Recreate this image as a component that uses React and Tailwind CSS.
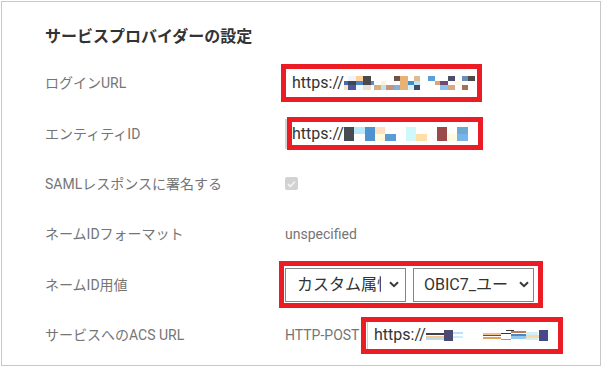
const m1 = [
  [4, 0, 8.3, 5, "#eef6fc"], [12.3, 0, 6.7, 5, "#fcd098"], [19, 0, 8.3, 5, "#4a4a4a"],
  [49.7, 0, 6.6, 5, "#6e5346"], [56.3, 0, 7.7, 5, "#e8b274"], [70, 0, 6.3, 5, "#dcbc96"],
  [84, 0, 6.7, 5, "#5a9fd8"], [104, 0, 6.7, 5, "#4b5068"], [118.3, 0, 5.7, 5, "#6c8fb8"],
  [124, 0, 6.7, 5, "#4d4a48"],
  [0, 5, 4, 4, "#4a68b0"], [4, 5, 8.3, 4, "#3f4658"], [12.3, 5, 6.7, 4, "#4a86c8"],
  [19, 5, 8.3, 4, "#4a4a4a"], [27.3, 5, 2.4, 4, "#4a92d2"], [37.3, 5, 5, 4, "#fff2d0"],
  [56.3, 5, 7.7, 4, "#e8b274"], [64, 5, 6, 4, "#3f8fd0"], [70, 5, 6.3, 4, "#b8e8f8"],
  [90.7, 5, 5.6, 4, "#e3a468"], [96.3, 5, 7.7, 4, "#6f4a72"], [110.7, 5, 6.6, 4, "#fff8e6"],
  [0, 9, 4, 5, "#fbe2c8"], [4, 9, 8.3, 5, "#4c5a9c"], [12.3, 9, 6.7, 5, "#f4f8fc"],
  [19, 9, 8.3, 5, "#e6e0d6"], [29.7, 9, 7.6, 5, "#d6b07e"], [37.3, 9, 5, 5, "#bce4ec"],
  [42.3, 9, 7.4, 5, "#c89282"], [49.7, 9, 6.6, 5, "#86b0d8"], [56.3, 9, 7.7, 5, "#e8b274"],
  [64, 9, 6, 5, "#d8f2f8"], [70, 9, 6.3, 5, "#434a6a"], [96.3, 9, 7.7, 5, "#8cc2f0"],
  [104, 9, 6.7, 5, "#d4aa82"], [118.3, 9, 5.7, 5, "#a27452"],
];

const m2 = [
  [0, 0, 10.3, 14, "#474c52"], [10.3, 0, 10.7, 7, "#b8e8fa"], [21, 0, 10, 14, "#4e93d0"],
  [31, 0, 10, 7, "#ffe0c2"], [31, 7, 10, 7, "#fffbd8"], [41, 7, 11, 7, "#5b9bd6"],
  [62, 0, 10, 14, "#cff8fb"], [72, 7, 11, 7, "#ffdfa8"], [93, 0, 10, 14, "#9b4a49"],
  [103, 7, 10, 7, "#fffbe0"], [113, 0, 11, 7, "#6eaad0"], [113, 7, 11, 7, "#79b4ea"],
];

const m4 = [
  [0, 3, 18, 2, "#40404e"], [0, 6, 18, 2, "#f4c890"], [0, 8, 18, 2, "#b8dcf0"],
  [18, 0, 9, 11, "#4b4a72"], [27, 2, 10, 2, "#b8e0f8"], [27, 6, 10, 2, "#d0ecfa"],
  [57, 3, 18, 2, "#f0c090"], [57, 5, 18, 1, "#6a4a3a"], [57, 7, 18, 2, "#e0a060"],
  [75, 3, 10, 1, "#3a3a3a"], [75, 9, 10, 1, "#9a9a9a"], [80, 0, 8, 1, "#3a3a3a"],
  [85, 1, 15, 2, "#c87850"], [85, 4, 15, 2, "#4a88c8"], [85, 6, 15, 3, "#90c8f0"],
  [100, 2, 12, 8, "#d0f0f8"], [100, 5, 13, 3, "#fcd8a0"], [113, 0, 9, 11, "#474a8a"],
];

function Mosaic({ cells, w, h }) {
  return (
    <svg width={w} height={h} viewBox={`0 0 ${w} ${h}`} className="shrink-0" shapeRendering="crispEdges">
      {cells.map(([x, y, cw, ch, c], i) => (
        <rect key={i} x={x} y={y} width={cw} height={ch} fill={c} />
      ))}
    </svg>
  );
}

function Chevron() {
  return (
    <svg width="10" height="7" viewBox="0 0 10 7" className="shrink-0">
      <path d="M1 1.2l4 4 4-4" fill="none" stroke="#3a3a3a" strokeWidth="2" />
    </svg>
  );
}

function Select({ text, pad }) {
  return (
    <div className={`flex items-center h-[34px] w-[121px] border border-[#858585] bg-white ${pad}`}>
      <span className="w-[84px] overflow-hidden whitespace-nowrap text-[16px] leading-5 text-[#333]">{text}</span>
      <span className="flex-1" />
      <Chevron />
    </div>
  );
}

function Row({ label, children }) {
  return (
    <div className="flex items-center h-[50.4px]">
      <div className="w-[240px] shrink-0 text-[14px] leading-5 text-[#757575]">{label}</div>
      <div className="flex items-center">{children}</div>
    </div>
  );
}

export default function App() {
  return (
    <div className="w-[606px] h-[368px] bg-white font-[Roboto,'Noto_Sans_CJK_JP',sans-serif] pt-px pl-px">
      <div className="w-[600px] h-[365px] border border-[#c8c8c8] pl-[43px] pt-[23px]">
        <h2 className="text-[16px] leading-6 font-bold text-[#333]">サービスプロバイダーの設定</h2>

        <div className="mt-[9px]">
          <Row label="ログインURL">
            <div className="-ml-[4px] flex items-center w-[201px] h-[38px] border-[5px] border-[#ec1c24] pl-[6px] bg-white">
              <span className="text-[16px] leading-5 text-[#333]">https://</span>
              <Mosaic cells={m1} w={131} h={14} />
            </div>
          </Row>

          <Row label="エンティティID">
            <div className="w-[2px] h-[30px] bg-[#d4d4d4]" />
            <div className="flex items-center w-[196px] h-[33px] border-[5px] border-[#ec1c24] bg-white">
              <span className="text-[16px] leading-5 text-[#333]">https://</span>
              <Mosaic cells={m2} w={124} h={14} />
            </div>
          </Row>

          <Row label="SAMLレスポンスに署名する">
            <div className="w-[13px] h-[13px] rounded-[2px] bg-[#d2d2d2] flex items-center justify-center">
              <svg width="9" height="8" viewBox="0 0 9 8">
                <path d="M1 4.2l2.3 2.3L8 1.5" fill="none" stroke="#f2f2f2" strokeWidth="1.8" />
              </svg>
            </div>
          </Row>

          <Row label="ネームIDフォーマット">
            <span className="text-[14px] leading-5 text-[#757575]">unspecified</span>
          </Row>

          <Row label="ネームID用値">
            <div className="-ml-[6px] flex items-center gap-[7px] h-[47px] border-[5px] border-[#ec1c24] pl-px pr-[4px] bg-white">
              <Select text="カスタム属性" pad="pl-[11px] pr-[6px]" />
              <Select text="OBIC7_ユーザID" pad="pl-[10px] pr-[4px]" />
            </div>
          </Row>

          <Row label="サービスへのACS URL">
            <span className="w-[76px] text-[14px] leading-5 text-[#757575]">HTTP-POST</span>
            <div className="flex items-center w-[202px] h-[37px] border-[5px] border-[#ec1c24] pl-px bg-white">
              <div className="flex items-center h-full border-l border-[#cfcfcf] pl-[6px]">
                <span className="text-[16px] leading-5 text-[#333]">https://</span>
                <Mosaic cells={m4} w={123} h={11} />
              </div>
            </div>
          </Row>
        </div>
      </div>
    </div>
  );
}
